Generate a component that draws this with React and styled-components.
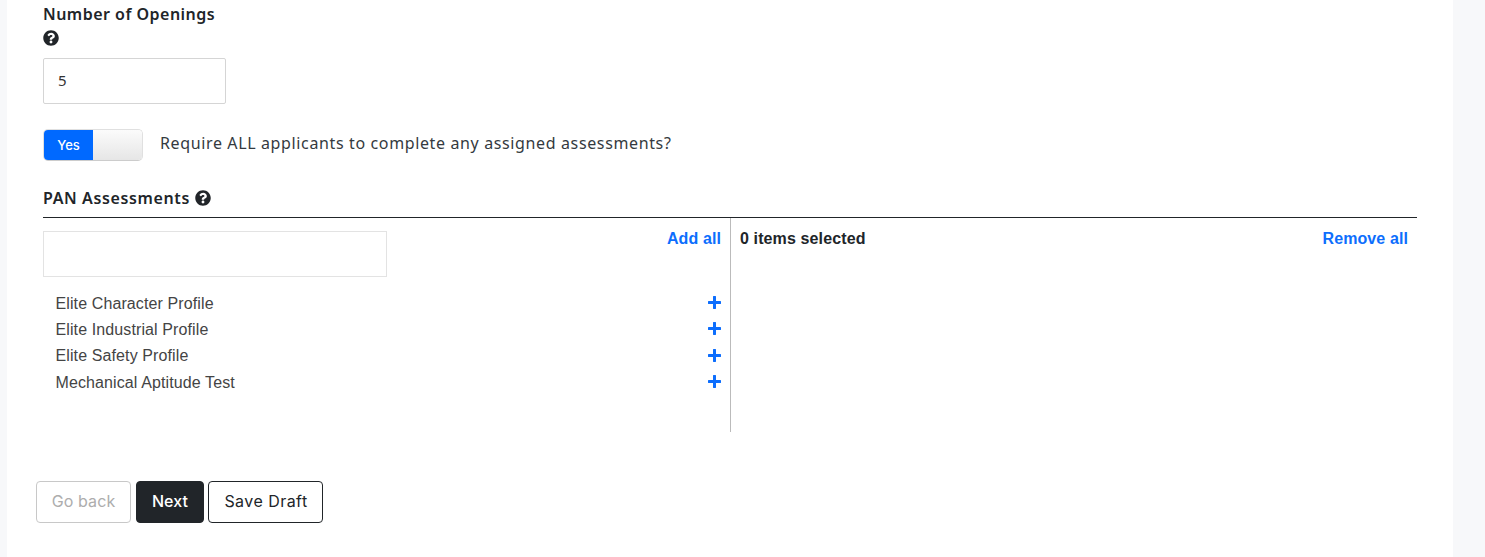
import React from "react";
import styled, { createGlobalStyle } from "styled-components";
import { FaQuestionCircle } from "react-icons/fa";

const GlobalStyle = createGlobalStyle`
  html, body {
    margin: 0;
    padding: 0;
    height: 557px;
    overflow: hidden;
    background-color: #f7f8fa;
  }
  * {
    box-sizing: border-box;
  }
`;

const Panel = styled.div`
  margin-left: 7px;
  width: 1446px;
  height: 557px;
  background-color: #ffffff;
  padding: 5px 36px 0 36px;
  color: #212529;
  font-family: Inter, "Noto Sans", sans-serif;
`;

const Form = styled.div`
  width: 1374px;
`;

const Label = styled.div`
  font-family: "Noto Sans", sans-serif;
  font-size: 16px;
  font-weight: 600;
  line-height: 18px;
  letter-spacing: 0.48px;
  color: #212529;
`;

const HelpLine = styled.div`
  height: 18px;
  margin-top: 6px;
  display: flex;
  align-items: center;
`;

const HelpIcon = styled(FaQuestionCircle)`
  width: 16px;
  height: 16px;
`;

const NumberBox = styled.div`
  width: 183px;
  height: 46px;
  margin-top: 11px;
  border: 1px solid #d5d5d5;
  border-radius: 2px;
  padding: 0 0 2px 14px;
  display: flex;
  align-items: center;
  font-family: "Noto Sans", sans-serif;
  font-size: 15px;
  color: #333333;
`;

const ToggleRow = styled.div`
  display: flex;
  align-items: center;
  margin-top: 25px;
  height: 32px;
`;

const Toggle = styled.div`
  width: 100px;
  height: 32px;
  display: flex;
  border: 1px solid #e0e0e0;
  border-bottom-color: #cccccc;
  border-radius: 5px;
  overflow: hidden;
`;

const ToggleOn = styled.div`
  width: 49px;
  background-color: #0069ff;
  color: #ffffff;
  font-family: Inter, sans-serif;
  font-size: 13px;
  font-weight: 500;
  display: flex;
  align-items: center;
  justify-content: center;
`;

const ToggleOff = styled.div`
  flex: 1;
  background: linear-gradient(#fbfbfb, #e6e6e6);
`;

const ToggleText = styled.div`
  margin-left: 17px;
  font-family: "Noto Sans", sans-serif;
  font-size: 16px;
  letter-spacing: 0.63px;
  color: #343a40;
  padding-bottom: 4px;
`;

const Heading = styled(Label)`
  margin-top: 28px;
  height: 18px;
  display: flex;
  align-items: center;
  gap: 5px;
  letter-spacing: 0.62px;
`;

const Chooser = styled.div`
  margin-top: 10px;
  border-top: 1px solid #212529;
  display: flex;
  height: 215px;
`;

const LeftColumn = styled.div`
  width: 688px;
  border-right: 1px solid #bbbbbb;
  padding: 12px 9px 0 0;
`;

const RightColumn = styled.div`
  flex: 1;
  padding: 12px 9px 0 9px;
`;

const TopRow = styled.div`
  display: flex;
  justify-content: space-between;
  align-items: flex-start;
`;

const SearchBox = styled.div`
  width: 344px;
  height: 46px;
  margin-top: 1px;
  border: 1px solid #e3e3e3;
`;

const Action = styled.a`
  font-family: "Liberation Sans", Arial, sans-serif;
  font-size: 16px;
  font-weight: 700;
  line-height: 18px;
  letter-spacing: 0.1px;
  color: #0d6efd;
`;

const SelectedCount = styled(Action)`
  color: #212529;
  letter-spacing: 0.12px;
`;

const ItemList = styled.div`
  margin-top: 13px;
`;

const Item = styled.div`
  height: 26.33px;
  padding-left: 13px;
  display: flex;
  align-items: center;
  justify-content: space-between;
`;

const ItemName = styled.span`
  font-family: "Liberation Sans", Arial, sans-serif;
  font-size: 16px;
  letter-spacing: 0.11px;
  color: #444444;
  margin-left: -0.5px;
  padding-top: 1px;
`;

const PlusSvg = styled.svg`
  width: 13px;
  height: 13px;
  margin-bottom: 1px;
`;

const PlusIcon = () => (
  <PlusSvg viewBox="0 0 13 13">
    <path
      d="M6.5 1v11M1 6.5h11"
      stroke="#0d6efd"
      strokeWidth="3"
      strokeLinecap="round"
      fill="none"
    />
  </PlusSvg>
);

const ButtonRow = styled.div`
  margin: 49px 0 0 -7px;
  display: flex;
`;

const Button = styled.button`
  height: 42px;
  width: ${(p) => p.$width}px;
  margin-right: ${(p) => p.$gap}px;
  padding: 0 0 2px ${(p) => (p.$variant === "outline" ? "1px" : "0")};
  border-radius: 4px;
  border: 1px solid ${(p) => (p.$variant === "muted" ? "#c8c8c8" : "#212529")};
  background-color: ${(p) => (p.$variant === "dark" ? "#212529" : "#ffffff")};
  color: ${(p) =>
    p.$variant === "dark" ? "#ffffff" : p.$variant === "muted" ? "#adadad" : "#212529"};
  font-family: Inter, sans-serif;
  font-size: 16px;
  font-weight: ${(p) => (p.$variant === "dark" ? 500 : 400)};
  letter-spacing: ${(p) => (p.$variant === "outline" ? "0.45px" : "0.1px")};
`;

const items = [
  "Elite Character Profile",
  "Elite Industrial Profile",
  "Elite Safety Profile",
  "Mechanical Aptitude Test",
];

export default function App() {
  return (
    <>
      <GlobalStyle />
      <Panel>
        <Form>
          <Label>Number of Openings</Label>
          <HelpLine>
            <HelpIcon />
          </HelpLine>
          <NumberBox>5</NumberBox>
          <ToggleRow>
            <Toggle>
              <ToggleOn>Yes</ToggleOn>
              <ToggleOff />
            </Toggle>
            <ToggleText>Require ALL applicants to complete any assigned assessments?</ToggleText>
          </ToggleRow>
          <Heading>
            PAN Assessments <HelpIcon />
          </Heading>
          <Chooser>
            <LeftColumn>
              <TopRow>
                <SearchBox />
                <Action>Add all</Action>
              </TopRow>
              <ItemList>
                {items.map((name) => (
                  <Item key={name}>
                    <ItemName>{name}</ItemName>
                    <PlusIcon />
                  </Item>
                ))}
              </ItemList>
            </LeftColumn>
            <RightColumn>
              <TopRow>
                <SelectedCount>0 items selected</SelectedCount>
                <Action>Remove all</Action>
              </TopRow>
            </RightColumn>
          </Chooser>
        </Form>
        <ButtonRow>
          <Button $variant="muted" $width={95} $gap={5}>Go back</Button>
          <Button $variant="dark" $width={68} $gap={4}>Next</Button>
          <Button $variant="outline" $width={115} $gap={0}>Save Draft</Button>
        </ButtonRow>
      </Panel>
    </>
  );
}
